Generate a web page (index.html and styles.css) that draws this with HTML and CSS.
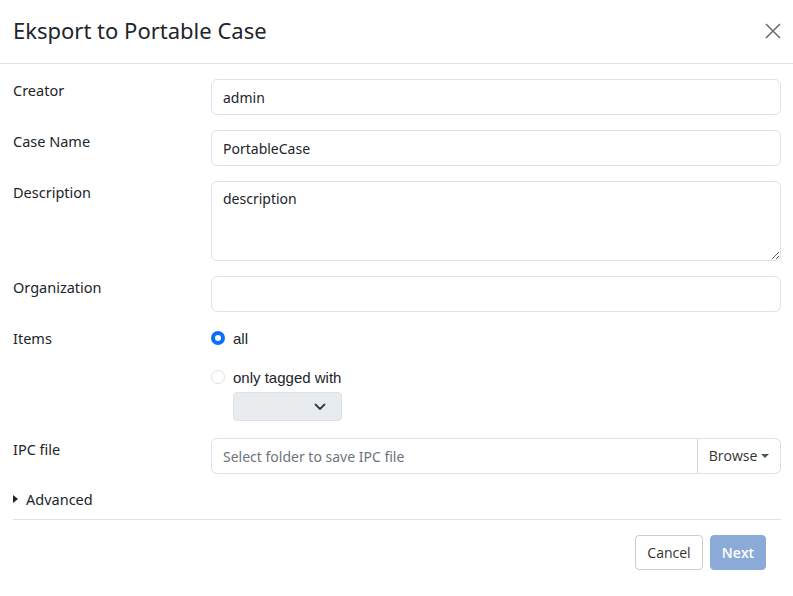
FILE: index.html
```html
<!DOCTYPE html>
<html lang="en">
<head>
<meta charset="utf-8">
<title>Eksport to Portable Case</title>
<link rel="stylesheet" href="styles.css">
</head>
<body>
<div class="modal">
  <div class="modal-header">
    <h1 class="title">Eksport to Portable Case</h1>
    <button class="close" aria-label="Close">
      <svg width="16" height="16" viewBox="0 0 16 16"><path d="M1 1L15 15M15 1L1 15" stroke="#6f6f6f" stroke-width="1.6" fill="none"/></svg>
    </button>
  </div>
  <div class="modal-body">
    <div class="row">
      <label class="label">Creator</label>
      <input class="input" type="text" value="admin">
    </div>
    <div class="row">
      <label class="label">Case Name</label>
      <input class="input" type="text" value="PortableCase">
    </div>
    <div class="row">
      <label class="label">Description</label>
      <textarea class="input textarea">description</textarea>
    </div>
    <div class="row">
      <label class="label">Organization</label>
      <input class="input" type="text" value="">
    </div>
    <div class="row items-row">
      <label class="label">Items</label>
      <div class="items">
        <div class="radio"><span class="dot checked"></span><span class="rlabel">all</span></div>
        <div class="radio second"><span class="dot"></span><span class="rlabel">only tagged with</span></div>
        <div class="select">
          <svg width="12" height="8" viewBox="0 0 12 8"><path d="M1.5 1.5L6 6L10.5 1.5" stroke="#343a40" stroke-width="1.8" fill="none" stroke-linecap="round" stroke-linejoin="round"/></svg>
        </div>
      </div>
    </div>
    <div class="row">
      <label class="label">IPC file</label>
      <div class="input-group">
        <input class="input group-input" type="text" placeholder="Select folder to save IPC file">
        <button class="browse">Browse <span class="caret"></span></button>
      </div>
    </div>
    <div class="advanced"><span class="tri"></span>Advanced</div>
    <hr class="sep">
  </div>
  <div class="modal-footer">
    <button class="btn cancel">Cancel</button>
    <button class="btn next">Next</button>
  </div>
</div>
</body>
</html>
```

FILE: styles.css
```css
* { box-sizing: border-box; }
html, body { margin: 0; padding: 0; background: #fff; }
body { font-family: "Noto Sans", "Open Sans", sans-serif; color: #212529; width: 793px; height: 596px; overflow: hidden; }

.modal { display: flex; flex-direction: column; }

.modal-header {
  height: 64px;
  border-bottom: 1px solid #dee2e6;
  display: flex;
  align-items: center;
  justify-content: space-between;
  padding: 0 12px 3px 13px;
}
.title { margin: 0; font-size: 22px; font-weight: 400; color: #212529; letter-spacing: 0; }
.close { border: 0; background: none; padding: 0; width: 16px; height: 16px; display: flex; margin-top: 2px; }

.modal-body { padding: 15px 12px 0 13px; display: flex; flex-direction: column; }

.row { display: grid; grid-template-columns: 198px 1fr; margin-bottom: 15px; }
.label { font-size: 14.5px; line-height: 20px; padding-top: 1px; color: #212529; }

.input {
  height: 36px;
  border: 1px solid #dee2e6;
  border-radius: 6px;
  padding: 0 12px 0 11px;
  font-family: "Noto Sans", sans-serif;
  font-size: 14px;
  color: #212529;
  background: #fff;
  width: 100%;
  outline: none;
}
.input::placeholder { color: #6c757d; }
.textarea { height: 80px; padding: 7px 12px 7px 11px; resize: vertical; line-height: 20px; display: block; }

.items-row { margin-bottom: 17px; }
.items { display: flex; flex-direction: column; }
.radio { display: flex; align-items: center; height: 22px; }
.radio.second { margin-top: 17px; }
.dot {
  width: 14px; height: 14px; border-radius: 50%;
  border: 1px solid #dee2e6; background: #fff; margin-right: 8px; flex: none;
}
.dot.checked { border: 4px solid #0d6efd; background: #fff; }
.rlabel { font-family: "Liberation Sans", Arial, sans-serif; font-size: 15px; color: #212529; }
.select {
  margin-left: 22px; margin-top: 4px;
  width: 109px; height: 29px;
  background: #e9ecef; border: 1px solid #dee2e6; border-radius: 4px;
  display: flex; align-items: center; justify-content: flex-end; padding-right: 15px;
}

.input-group { display: flex; }
.group-input { flex: 1; border-radius: 6px 0 0 6px; }
.browse {
  width: 84px; height: 36px;
  border: 1px solid #dee2e6; border-left: 1px solid #d6d6d6; border-radius: 0 6px 6px 0;
  background: #fff; margin-left: -1px;
  font-family: "Open Sans", "Noto Sans", sans-serif; font-size: 14px; color: #333;
  display: flex; align-items: center; justify-content: center; gap: 4px; padding: 0 0 1px 0;
}
.caret { width: 0; height: 0; border-left: 4px solid transparent; border-right: 4px solid transparent; border-top: 4px solid #555; margin-top: 1px; }

.advanced { display: flex; align-items: center; font-size: 14.5px; line-height: 20px; margin-top: 0; }
.tri { width: 0; height: 0; border-top: 4px solid transparent; border-bottom: 4px solid transparent; border-left: 5px solid #212529; margin-right: 8px; }
.sep { border: 0; border-top: 1px solid #dee2e6; margin: 10px 0 0 0; }

.modal-footer { display: flex; justify-content: flex-end; gap: 7px; padding: 15px 27px 0 0; }
.btn { height: 35px; border-radius: 4px; font-family: "Open Sans", "Noto Sans", sans-serif; font-size: 14px; padding: 0; }
.cancel { width: 68px; background: #fff; border: 1px solid #ccc; color: #333; }
.next { width: 56px; background: #8caad8; border: 1px solid #8caad8; color: #fff; font-weight: 600; }
```
